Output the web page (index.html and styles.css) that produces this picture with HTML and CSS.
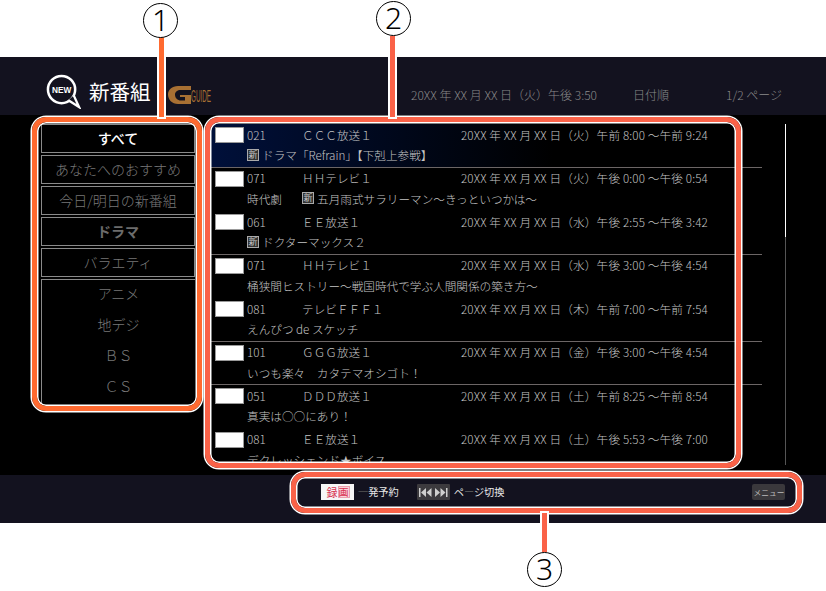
FILE: index.html
```html
<!DOCTYPE html>
<html lang="ja">
<head>
<meta charset="utf-8">
<title>新番組</title>
<link rel="stylesheet" href="styles.css">
</head>
<body>
<div class="page">
  <div class="sky"></div>
  <div class="screen">
    <header class="head">
      <svg class="new-icon" viewBox="0 0 36 36" width="35" height="35" aria-hidden="true">
        <circle cx="16" cy="16" r="14" fill="#13121f" stroke="#fff" stroke-width="2.6"/>
        <path d="M23 27 L34 34 L28.5 22" fill="#13121f" stroke="#fff" stroke-width="2.4" stroke-linejoin="miter"/>
        <text x="16" y="19.5" class="new-text" text-anchor="middle">NEW</text>
      </svg>
      <h1 class="title">新番組</h1>
      <svg class="gguide" viewBox="0 0 44 20" width="44" height="20" aria-hidden="true">
        <path d="M23 1 H10 C4 1 0 5 0 9.500 C0 14.500 4 19 10 19 H23 V10 H12 V12 H17 V15.500 H13 C9.500 15.500 7 13 7 9.500 C7 7 9.500 5 12.500 5 H23 Z" fill="#a87033"/>
        <text x="23" y="17" class="gguide-text" textLength="20" lengthAdjust="spacingAndGlyphs">GUIDE</text>
      </svg>
      <span class="clock">20XX 年 XX 月 XX 日（火）午後 3:50</span>
      <span class="sort">日付順</span>
      <span class="pages">1/2 ページ</span>
    </header>

    <main class="body">
      <nav class="side">
        <div class="item on">すべて</div>
        <div class="item">あなたへのおすすめ</div>
        <div class="item">今日/明日の新番組</div>
        <div class="item strong">ドラマ</div>
        <div class="item">バラエティ</div>
        <div class="group">
          <div class="sub">アニメ</div>
          <div class="sub">地デジ</div>
          <div class="sub">ＢＳ</div>
          <div class="sub">ＣＳ</div>
        </div>
      </nav>

      <section class="list">
        <article class="prog sel line">
          <div class="row"><i class="chk"></i><span class="num">021</span><span class="name">ＣＣＣ放送１</span><span class="date">20XX 年 XX 月 XX 日（火）午前 8:00 ～午前 9:24</span></div>
          <div class="sub-row"><b class="new">新</b>ドラマ「Refrain」【下剋上参戦】</div>
        </article>
        <article class="prog">
          <div class="row"><i class="chk"></i><span class="num">071</span><span class="name">ＨＨテレビ１</span><span class="date">20XX 年 XX 月 XX 日（火）午後 0:00 ～午後 0:54</span></div>
          <div class="sub-row"><span class="genre">時代劇</span><b class="new">新</b>五月雨式サラリーマン～きっといつかは～</div>
        </article>
        <article class="prog line">
          <div class="row"><i class="chk"></i><span class="num">061</span><span class="name">ＥＥ放送１</span><span class="date">20XX 年 XX 月 XX 日（水）午後 2:55 ～午後 3:42</span></div>
          <div class="sub-row"><b class="new">新</b>ドクターマックス２</div>
        </article>
        <article class="prog">
          <div class="row"><i class="chk"></i><span class="num">071</span><span class="name">ＨＨテレビ１</span><span class="date">20XX 年 XX 月 XX 日（水）午後 3:00 ～午後 4:54</span></div>
          <div class="sub-row">桶狭間ヒストリー～戦国時代で学ぶ人間関係の築き方～</div>
        </article>
        <article class="prog line">
          <div class="row"><i class="chk"></i><span class="num">081</span><span class="name">テレビＦＦＦ１</span><span class="date">20XX 年 XX 月 XX 日（木）午前 7:00 ～午前 7:54</span></div>
          <div class="sub-row">えんぴつ de スケッチ</div>
        </article>
        <article class="prog line">
          <div class="row"><i class="chk"></i><span class="num">101</span><span class="name">ＧＧＧ放送１</span><span class="date">20XX 年 XX 月 XX 日（金）午後 3:00 ～午後 4:54</span></div>
          <div class="sub-row">いつも楽々　カタテマオシゴト！</div>
        </article>
        <article class="prog">
          <div class="row"><i class="chk"></i><span class="num">051</span><span class="name">ＤＤＤ放送１</span><span class="date">20XX 年 XX 月 XX 日（土）午前 8:25 ～午前 8:54</span></div>
          <div class="sub-row">真実は○○にあり！</div>
        </article>
        <article class="prog">
          <div class="row"><i class="chk"></i><span class="num">081</span><span class="name">ＥＥ放送１</span><span class="date">20XX 年 XX 月 XX 日（土）午後 5:53 ～午後 7:00</span></div>
          <div class="sub-row">デクレッシェンド★ボイス</div>
        </article>
      </section>

      <div class="scroll"><div class="thumb"></div></div>
    </main>

    <footer class="foot">
      <span class="key rec">録<em>画</em></span>
      <span class="label first"><span class="dim">一</span>発予約</span>
      <span class="key skip">
        <svg viewBox="0 0 29 9" width="29" height="9" aria-hidden="true">
          <path d="M0 0h1.500v9H0zM2 4.500 L7 0 V9ZM7.500 4.500 L12.500 0 V9ZM16 0 L21 4.500 L16 9ZM21.500 0 L26.500 4.500 L21.500 9ZM27 0h1.500v9H27z" fill="#cfcfcf"/>
        </svg>
      </span>
      <span class="label">ペ<span class="dim">ー</span>ジ切換</span>
      <span class="key menu">メニュー</span>
    </footer>
  </div>
</div>

<div class="callout c1"></div>
<div class="callout c2"></div>
<div class="callout c3"></div>
<div class="leader l1"></div>
<div class="leader l2"></div>
<div class="leader l3"></div>
<div class="mark m1">1</div>
<div class="mark m2">2</div>
<div class="mark m3">3</div>
</body>
</html>
```

FILE: styles.css
```css
* { box-sizing: border-box; }
html, body { margin: 0; padding: 0; background: #fff; }
body {
  width: 826px;
  height: 591px;
  overflow: hidden;
  font-family: "Noto Sans CJK JP", "Noto Sans", sans-serif;
  font-weight: 300;
}
.sky { height: 57px; }
.screen { height: 466px; background: #000; display: flex; flex-direction: column; }

/* header */
.head {
  height: 58px;
  background: #13121f;
  display: flex;
  align-items: center;
  padding-left: 46px;
  color: #8a8a8a;
  font-size: 12px;
}
.new-icon { margin-top: 10px; margin-right: 8px; flex: none; }
.new-text { font: 700 8.5px "Liberation Sans", sans-serif; fill: #fff; }
.title { margin: 10px 0 0; font-size: 20.500px; font-weight: 400; color: #fff; width: 79px; }
.gguide { margin-top: 18px; flex: none; overflow: visible; }
.gguide-text { font: 400 16px "Liberation Sans Narrow", "Liberation Sans", sans-serif; fill: #a87033; }
.clock { margin: 16px 0 0 199px; width: 222px; white-space: nowrap; }
.sort { margin-top: 16px; width: 93px; }
.pages { margin-top: 16px; white-space: nowrap; }

/* body */
.body { height: 360px; display: flex; padding: 9px 0 0 41px; overflow: hidden; }
.side { width: 154px; flex: none; margin-right: 16px; }
.item {
  height: 29px;
  margin-bottom: 2px;
  border: 1px solid #8a8a8a;
  color: #787878;
  font-size: 14px;
  line-height: 26px;
  text-align: center;
}
.item.on { color: #fff; font-weight: 500; }
.item.strong { color: #6c6c6c; font-weight: 700; }
.group { border-top: 1px solid #8a8a8a; border-left: 1px solid #8a8a8a; }
.sub { height: 31px; line-height: 26px; text-align: center; color: #787878; font-size: 14px; }

/* list */
.list { width: 551px; height: 340px; flex: none; overflow: hidden; color: #c4c4c4; font-size: 11.640px; }
.prog { height: 43.500px; padding-left: 4px; }
.prog.line { border-bottom: 1px solid #6c6666; }
.prog.sel { background: linear-gradient(90deg, #00103a, #000 62%); }
.row { display: flex; align-items: center; height: 22px; white-space: nowrap; }
.chk { width: 29px; height: 16px; background: #fff; border: 1px solid #999; margin-right: 3px; flex: none; }
.num { width: 55px; flex: none; margin-bottom: 2px; }
.name { width: 159px; flex: none; margin-bottom: 2px; }
.date { letter-spacing: .15px; margin-bottom: 2px; }
.sub-row { display: flex; align-items: center; height: 18px; padding-left: 32px; padding-bottom: 1px; white-space: nowrap; }
.genre { width: 55px; flex: none; }
.new {
  width: 12px; height: 12px; margin-right: 3px; flex: none;
  border: 1px solid #aaa; background: #333;
  font-size: 9px; line-height: 9px; font-weight: 400; text-align: center;
}
.scroll { margin-left: 23px; width: 1px; height: 341px; background: #555; }
.thumb { height: 113px; background: #fff; }

/* footer */
.foot {
  height: 48px;
  background: #13121f;
  display: flex;
  align-items: center;
  padding-left: 321px;
  padding-bottom: 14px;
  color: #e8e8e8;
  font-size: 10.200px;
  font-weight: 400;
}
.key { height: 16px; display: flex; align-items: center; justify-content: center; flex: none; }
.rec { width: 33px; background: #f6f6f6; color: #d83050; font-size: 11px; }
.rec em { font-style: normal; margin-left: 1px; font-size: 10px; line-height: 10px; background: #f8d4da; outline: 1px solid #eaa0ae; }
.skip { width: 33px; background: #3c3a3e; border-radius: 1px; }
.label { white-space: nowrap; margin-bottom: 2px; }
.label.first { margin: 0 18px 2px 4px; }
.label:not(.first) { margin-left: 4px; }
.dim { color: #555; }
.menu { width: 33px; margin-left: 248px; background: #3a383c; color: #bbb; font-size: 7.700px; border-radius: 2px; }

/* annotations laid over the screenshot */
.callout {
  position: absolute;
  border: 5px solid #ff6a30;
  border-radius: 14px;
  box-shadow: 0 0 0 1.500px #fff, inset 0 0 0 1.500px #fff;
}
.c1 { left: 32px; top: 117px; width: 170px; height: 294px; }
.c2 { left: 205px; top: 117px; width: 536px; height: 351px; border-color: #fa6248; }
.c3 { left: 291px; top: 472px; width: 511px; height: 41px; border-color: #fa6248; }
.leader { position: absolute; width: 5px; background: #ff6a30; box-shadow: 0 0 0 2px #fff; }
.l1 { left: 159px; top: 37px; height: 80px; }
.l2 { left: 390px; top: 36px; height: 81px; background: #fa6248; }
.l3 { left: 542px; top: 513px; height: 39px; background: #fa6248; }
.mark {
  position: absolute;
  width: 35px;
  height: 35px;
  border: 1px solid #000;
  border-radius: 50%;
  background: #fff;
  color: #000;
  font: 300 30px/32px "Noto Sans", sans-serif;
  text-align: center;
}
.m1 { left: 143px; top: 3px; }
.m2 { left: 376px; top: 1px; }
.m3 { left: 527px; top: 552px; }
```
